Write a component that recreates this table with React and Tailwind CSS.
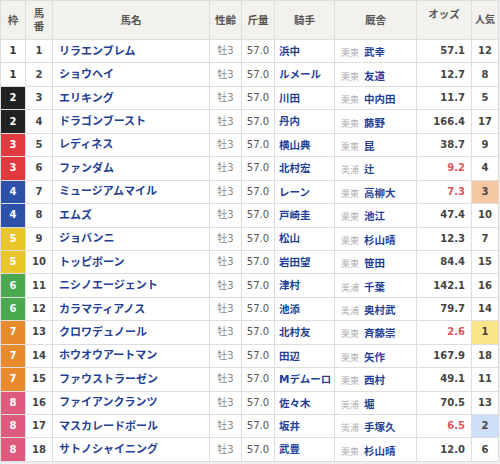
import React from "react";

const WAKU = {
  1: "bg-white text-[#333]",
  2: "bg-[#222222] text-white",
  3: "bg-[#e03a3e] text-white",
  4: "bg-[#2d50a8] text-white",
  5: "bg-[#e9c52a] text-white",
  6: "bg-[#4aa84e] text-white",
  7: "bg-[#e8892c] text-white",
  8: "bg-[#de5a7c] text-white",
};

const NINKI = {
  1: "bg-[#fbe58a]",
  2: "bg-[#cddff6]",
  3: "bg-[#f5c8a0]",
};

const rows = [
  [1, 1, "リラエンブレム", "浜中", "栗東", "武幸", "57.1", 12],
  [1, 2, "ショウヘイ", "ルメール", "栗東", "友道", "12.7", 8],
  [2, 3, "エリキング", "川田", "栗東", "中内田", "11.7", 5],
  [2, 4, "ドラゴンブースト", "丹内", "栗東", "藤野", "166.4", 17],
  [3, 5, "レディネス", "横山典", "栗東", "昆", "38.7", 9],
  [3, 6, "ファンダム", "北村宏", "美浦", "辻", "9.2", 4],
  [4, 7, "ミュージアムマイル", "レーン", "栗東", "高柳大", "7.3", 3],
  [4, 8, "エムズ", "戸崎圭", "栗東", "池江", "47.4", 10],
  [5, 9, "ジョバンニ", "松山", "栗東", "杉山晴", "12.3", 7],
  [5, 10, "トッピボーン", "岩田望", "栗東", "笹田", "84.4", 15],
  [6, 11, "ニシノエージェント", "津村", "美浦", "千葉", "142.1", 16],
  [6, 12, "カラマティアノス", "池添", "美浦", "奥村武", "79.7", 14],
  [7, 13, "クロワデュノール", "北村友", "栗東", "斉藤崇", "2.6", 1],
  [7, 14, "ホウオウアートマン", "田辺", "栗東", "矢作", "167.9", 18],
  [7, 15, "ファウストラーゼン", "Mデムーロ", "栗東", "西村", "49.1", 11],
  [8, 16, "ファイアンクランツ", "佐々木", "美浦", "堀", "70.5", 13],
  [8, 17, "マスカレードボール", "坂井", "美浦", "手塚久", "6.5", 2],
  [8, 18, "サトノシャイニング", "武豊", "栗東", "杉山晴", "12.0", 6],
];

const font = {
  fontFamily: '"DejaVu Sans", "Noto Sans CJK JP", sans-serif',
};

export default function App() {
  const cell = "border border-[#dddddd] p-0 leading-none overflow-hidden";
  const hcell = "border border-[#dddddd] p-0 leading-none text-center";
  return (
    <div className="w-[500px] h-[464px] bg-[#eeeeee] overflow-hidden" style={font}>
      <table className="w-[499px] border-collapse table-fixed bg-white">
        <colgroup>
          <col className="w-[25px]" />
          <col className="w-[27px]" />
          <col className="w-[157px]" />
          <col className="w-[32px]" />
          <col className="w-[33px]" />
          <col className="w-[60px]" />
          <col className="w-[82px]" />
          <col className="w-[55px]" />
          <col />
        </colgroup>
        <thead>
          <tr className="h-[39px] bg-[#f3f1ed] text-[#555] text-[10.5px] font-bold">
            <th className={hcell + " align-middle"}>枠</th>
            <th className={hcell + " align-middle !leading-[13px]"}>
              馬<br />番
            </th>
            <th className={hcell + " align-middle"}>馬名</th>
            <th className={hcell + " align-middle"}>性齢</th>
            <th className={hcell + " align-middle"}>斤量</th>
            <th className={hcell + " align-middle"}>騎手</th>
            <th className={hcell + " align-middle"}>厩舎</th>
            <th className={hcell + " align-top pt-[8px]"}>オッズ</th>
            <th className={hcell + " align-middle text-[10px] whitespace-nowrap"}>人気</th>
          </tr>
        </thead>
        <tbody>
          {rows.map(([w, n, name, jockey, area, trainer, odds, ninki]) => {
            const hot = parseFloat(odds) < 10;
            return (
              <tr key={n} className="h-[23.45px]">
                <td className={cell + " text-center text-[10px] font-bold " + WAKU[w]}>{w}</td>
                <td className={cell + " text-center text-[10px] font-bold text-[#444]"}>{n}</td>
                <td className={cell + " pl-[6px] text-[11px] font-bold text-[#1f3f96] whitespace-nowrap"}>{name}</td>
                <td className={cell + " text-center text-[10px] text-[#888]"}>牡3</td>
                <td className={cell + " text-center text-[10px] text-[#555]"}>57.0</td>
                <td className={cell + " pl-[4px] text-[10.5px] font-bold text-[#1f3f96] whitespace-nowrap"}>{jockey}</td>
                <td className={cell + " pl-[6px] whitespace-nowrap"}>
                  <span className="text-[9px] text-[#b0b0b0] mr-[5px]">{area}</span>
                  <span className="text-[10.5px] font-bold text-[#1f3f96]">{trainer}</span>
                </td>
                <td className={cell + " text-right pr-[6px] text-[10px] font-bold " + (hot ? "text-[#e05558]" : "text-[#444]")}>{odds}</td>
                <td className={cell + " text-center text-[10px] font-bold text-[#444] " + (NINKI[ninki] || "")}>{ninki}</td>
              </tr>
            );
          })}
        </tbody>
      </table>
    </div>
  );
}
